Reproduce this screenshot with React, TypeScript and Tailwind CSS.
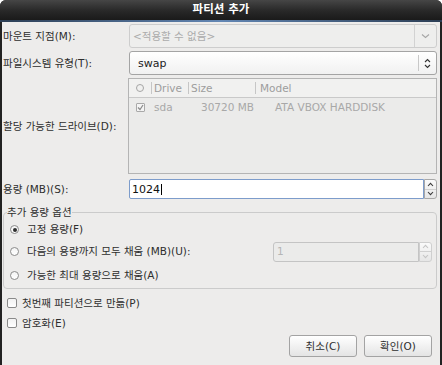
const ui = "font-['DejaVu_Sans','Noto_Sans_CJK_KR',sans-serif]"

function ChevronDown({ color = '#9a9a9a' }: { color?: string }) {
  return (
    <svg width="9" height="6" viewBox="0 0 9 6">
      <path d="M1 1.5 L4.5 4.5 L8 1.5" fill="none" stroke={color} strokeWidth="1.1" />
    </svg>
  )
}

function UpDown() {
  return (
    <svg width="7" height="11" viewBox="0 0 7 11">
      <path d="M1 4 L3.5 1.5 L6 4" fill="none" stroke="#333" strokeWidth="1.1" />
      <path d="M1 7 L3.5 9.5 L6 7" fill="none" stroke="#333" strokeWidth="1.1" />
    </svg>
  )
}

function Spin({ disabled }: { disabled?: boolean }) {
  const c = disabled ? '#c4c4c4' : '#3a3a3a'
  return (
    <div className={`flex w-[13px] shrink-0 flex-col ${disabled ? 'border-[#cfcfcf]' : 'border-[#a8a8a8]'} rounded-r-[3px] border bg-gradient-to-b from-[#fafafa] to-[#e6e6e6]`}>
      <div className="flex flex-1 items-center justify-center border-b border-[#d0d0d0]">
        <svg width="7" height="5" viewBox="0 0 7 5">
          <path d="M1 4 L3.5 1.3 L6 4" fill="none" stroke={c} strokeWidth="1.1" />
        </svg>
      </div>
      <div className="flex flex-1 items-center justify-center">
        <svg width="7" height="5" viewBox="0 0 7 5">
          <path d="M1 1 L3.5 3.7 L6 1" fill="none" stroke={c} strokeWidth="1.1" />
        </svg>
      </div>
    </div>
  )
}

function Radio({ checked, label }: { checked?: boolean; label: string }) {
  return (
    <div className="flex items-center gap-[8px]">
      <span className="ml-[3px] flex h-[9px] w-[9px] items-center justify-center rounded-full border border-[#8c8c8c] bg-gradient-to-b from-[#f4f4f4] to-white">
        {checked && <span className="h-[4px] w-[4px] rounded-full bg-[#2d2d2d]" />}
      </span>
      <span>{label}</span>
    </div>
  )
}

function Check({ label }: { label: string }) {
  return (
    <div className="flex h-[20px] items-center gap-[5px] pl-[5px]">
      <span className="h-[10px] w-[10px] rounded-[2px] border border-[#8a8a8a] bg-gradient-to-b from-[#f2f2f2] to-white" />
      <span>{label}</span>
    </div>
  )
}

function Button({ label }: { label: string }) {
  return (
    <button className="flex h-[22px] w-[68px] items-center justify-center rounded-[3px] border border-[#a3a3a3] bg-gradient-to-b from-white to-[#e4e4e4] text-[#2e2e2e]">
      {label}
    </button>
  )
}

export default function App() {
  return (
    <div className={`${ui} h-[365px] w-[442px] overflow-hidden bg-white text-[10.5px] leading-none text-[#2e2e2e]`}>
      <div className="flex h-full flex-col overflow-hidden rounded-t-[6px] bg-[#222]">
        <div className="flex h-[20px] items-center justify-center bg-gradient-to-b from-[#464646] via-[#2a2a2a] to-[#1a1a1a] text-[11.5px] font-bold text-white">
          파티션 추가
        </div>
        <div className="h-[2px] bg-gradient-to-r from-[#2c3e55] via-[#6387b4] to-[#2c3e55]" />

        <div className="mx-[2px] flex flex-1 flex-col bg-[#edeceb] pr-[3px]">
          <div className="mt-[2px] grid grid-cols-[127px_1fr] items-center gap-y-[3px]">
            <span className="pl-[1px]">마운트 지점(M):</span>
            <div className="flex h-[24px] items-stretch rounded-[3px] border border-[#cdcdcd] bg-[#eeeeed]">
              <span className="flex flex-1 items-center pl-[3px] text-[#ababab]">&lt;적용할 수 없음&gt;</span>
              <span className="flex w-[22px] items-center justify-center border-l border-[#d2d2d2]">
                <ChevronDown color="#a6a6a6" />
              </span>
            </div>

            <span className="pl-[1px]">파일시스템 유형(T):</span>
            <div className="flex h-[24px] items-stretch rounded-[3px] border border-[#a4a4a4] bg-gradient-to-b from-white to-[#f1f1f1]">
              <span className="flex flex-1 items-center pl-[8px] text-[11px] text-[#222]">swap</span>
              <span className="my-[3px] flex w-[18px] items-center justify-center border-l border-[#c8c8c8]">
                <UpDown />
              </span>
            </div>
          </div>

          <div className="mt-[3px] grid grid-cols-[126px_1fr] items-center">
            <span className="pl-[1px]">할당 가능한 드라이브(D):</span>
            <div className="flex h-[96px] flex-col border border-[#b4b4b4] bg-[#ebebea]">
              <div className="grid h-[19px] grid-cols-[22px_37px_67px_1fr] items-center border-b border-[#c9c9c9] bg-[#f1f1f0] text-[#9d9d9d]">
                <span className="flex justify-center">
                  <span className="h-[8px] w-[8px] rounded-full border border-[#a5a5a5]" />
                </span>
                <span className="flex items-center gap-[2px]">
                  <span className="h-[12px] w-px bg-[#c6c6c6]" />
                  Drive
                </span>
                <span className="flex items-center gap-[2px]">
                  <span className="h-[12px] w-px bg-[#c6c6c6]" />
                  Size
                </span>
                <span className="flex items-center gap-[4px]">
                  <span className="h-[12px] w-px bg-[#c6c6c6]" />
                  Model
                </span>
              </div>
              <div className="grid h-[18px] grid-cols-[22px_47px_74px_1fr] items-center text-[#a8a8a8]">
                <span className="flex justify-center">
                  <span className="flex h-[9px] w-[9px] items-center justify-center rounded-[1px] border border-[#a9a9a9] bg-[#f4f4f4]">
                    <svg width="7" height="7" viewBox="0 0 7 7">
                      <path d="M1 3.5 L3 5.5 L6 1" fill="none" stroke="#8a8a8a" strokeWidth="1.2" />
                    </svg>
                  </span>
                </span>
                <span className="pl-[3px]">sda</span>
                <span className="pl-[3px]">30720 MB</span>
                <span className="pl-[3px]">ATA VBOX HARDDISK</span>
              </div>
            </div>
          </div>

          <div className="mt-[5px] grid grid-cols-[127px_1fr] items-center">
            <span className="pl-[1px]">용량 (MB)(S):</span>
            <div className="flex h-[20px]">
              <div className="flex flex-1 items-center rounded-l-[2px] border border-[#7d9ccb] bg-white pl-[2px] text-[11px] text-[#111]">
                <span className="border-r border-black pr-[1px]">1024</span>
              </div>
              <Spin />
            </div>
          </div>

          <fieldset className="ml-[1px] mt-[7px] rounded-[4px] border border-[#cbcbcb] px-[3px]">
            <legend className="leading-[13px]">추가 용량 옵션</legend>
            <div className="flex h-[21px] items-center">
              <Radio checked label="고정 용량(F)" />
            </div>
            <div className="flex h-[23px] items-center justify-between pr-[1px]">
              <Radio label="다음의 용량까지 모두 채움 (MB)(U):" />
              <div className="flex h-[20px] w-[159px]">
                <div className="flex flex-1 items-center rounded-l-[3px] border border-[#c4c4c4] bg-[#ebebea] pl-[3px] text-[#b5b5b5]">
                  1
                </div>
                <Spin disabled />
              </div>
            </div>
            <div className="flex h-[25px] items-center">
              <Radio label="가능한 최대 용량으로 채움(A)" />
            </div>
          </fieldset>

          <div className="mt-[4px]">
            <Check label="첫번째 파티션으로 만듦(P)" />
            <Check label="암호화(E)" />
          </div>

          <div className="mt-[2px] flex justify-end gap-[7px] pr-[5px]">
            <Button label="취소(C)" />
            <Button label="확인(O)" />
          </div>
        </div>
      </div>
    </div>
  )
}
